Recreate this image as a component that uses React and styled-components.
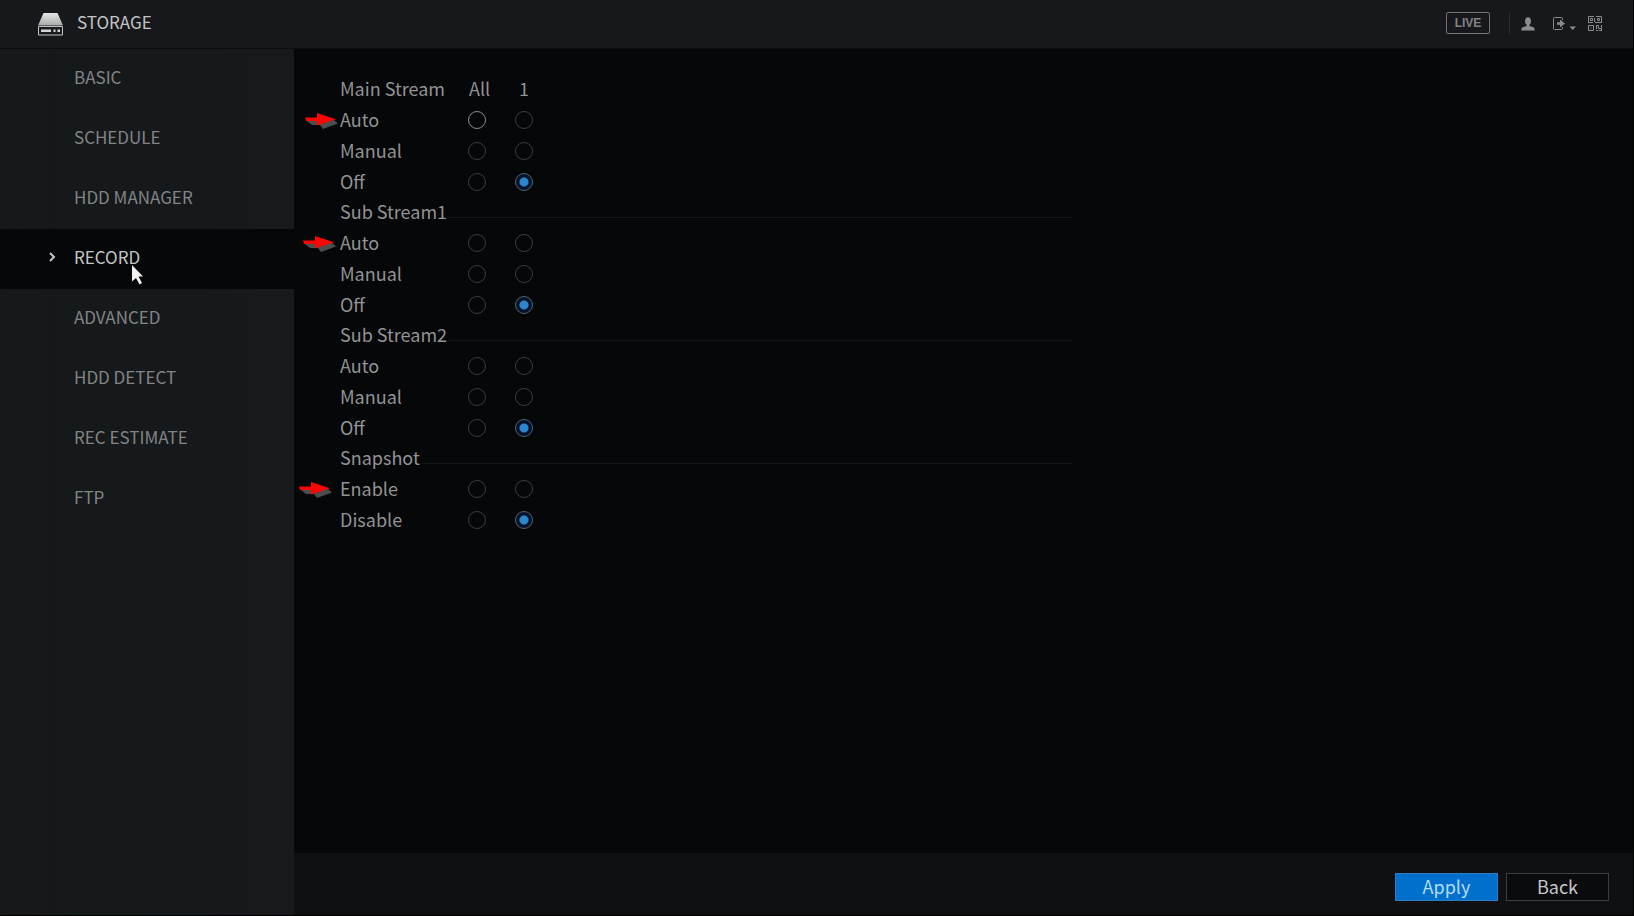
import React, { useState } from 'react';
import styled, { createGlobalStyle } from 'styled-components';

const GlobalStyle = createGlobalStyle`
  * {
    box-sizing: border-box;
  }
  body {
    margin: 0;
    background: #050708;
    color: #929394;
    font-family: "Noto Sans CJK SC", "Noto Sans", sans-serif;
    font-size: 18px;
    line-height: 24px;
  }
`;

const Page = styled.div`
  display: flex;
  flex-direction: column;
  min-height: 100vh;
  border-right: 1px solid #000;
  border-bottom: 1px solid #000;
`;

const Header = styled.header`
  display: flex;
  align-items: center;
  justify-content: space-between;
  height: 49px;
  padding: 0 31px 3px 38px;
  background: #17181b;
  border-bottom: 1px solid #0c0d0f;
`;

const Title = styled.h1`
  display: flex;
  align-items: center;
  gap: 14px;
  margin: 0;
  padding-bottom: 2px;
  color: #c3c4c5;
  font-size: 17px;
  font-weight: 400;

  svg {
    margin-top: 6px;
  }
`;

const Tools = styled.div`
  display: flex;
  align-items: center;
`;

const LiveButton = styled.button`
  width: 44px;
  height: 22px;
  padding: 0;
  border: 1px solid #737476;
  border-radius: 2px;
  background: transparent;
  color: #828385;
  font: bold 12px/18px "Liberation Sans", Arial, sans-serif;
`;

const Separator = styled.span`
  width: 1px;
  height: 22px;
  margin: 0 11px 0 19px;
  background: #2b2c2f;
`;

const IconButton = styled.button`
  display: flex;
  padding: 2px 0 0;
  margin-right: ${props => props.$space || 0}px;
  border: 0;
  background: transparent;
  color: #8b8c8e;
`;

const Body = styled.div`
  display: flex;
  flex: 1;
`;

const Sidebar = styled.nav`
  flex: 0 0 294px;
  background: linear-gradient(90deg, #17181a 0%, #15191a 25%, #15191b 55%, #18191c 100%);
`;

const NavLink = styled.a`
  position: relative;
  display: flex;
  align-items: center;
  height: 60px;
  padding: 0 0 4px 49px;
  background: ${props => (props.$active ? '#050708' : 'transparent')};
  color: ${props => (props.$active ? '#c4c5c6' : '#828485')};
  font-size: 17px;
  text-decoration: none;
`;

const NavMark = styled.span`
  display: flex;
  width: 25px;
`;

// lies over the active entry
const Pointer = styled.svg`
  position: absolute;
  left: 131px;
  top: 36px;
`;

const Main = styled.div`
  display: flex;
  flex: 1;
  flex-direction: column;
`;

const Content = styled.main`
  flex: 1;
  padding: 23px 46px;
`;

const RecordTable = styled.table`
  width: 100%;
  max-width: 732px;
  table-layout: fixed;
  border-collapse: collapse;

  th,
  td {
    height: 31px;
    padding: 0;
    font-weight: 400;
    text-align: left;
  }
`;

const LabelCol = styled.col`
  width: 113px;
`;

const ChannelCol = styled.col`
  width: ${props => props.$width}px;
`;

const ColumnHead = styled.th`
  && {
    padding-left: ${props => props.$indent}px;
  }
`;

const GroupHead = styled.th`
  && {
    height: 30px;
  }
`;

const GroupTitle = styled.div`
  display: flex;
  align-items: center;
  gap: 2px;
`;

const GroupLine = styled.span`
  flex: 1;
  height: 1px;
  margin-top: 12px;
  background: #15181a;
`;

const RowHead = styled.th`
  position: relative;
`;

const ArrowMark = styled.svg`
  position: absolute;
  top: 10px;
  right: calc(100% + ${props => props.$gap}px);
`;

const RadioCell = styled.td`
  && {
    text-align: center;
  }
`;

const Radio = styled.input`
  display: block;
  width: 18px;
  height: 18px;
  margin: 2px auto 0;
  appearance: none;
  border: 1px solid ${props => (props.$focus ? '#8a8b8c' : '#3a3c3d')};
  border-radius: 50%;
  background: transparent;

  &:checked {
    border-color: #54616e;
    background: radial-gradient(circle, #2b86cf 0, #2b86cf 4px, #04142b 5px);
  }
`;

const Footer = styled.footer`
  display: flex;
  align-items: flex-start;
  justify-content: flex-end;
  gap: 8px;
  height: 62px;
  padding: 20px 24px 0;
  background: #0e1012;
`;

const Button = styled.button`
  width: 103px;
  height: 28px;
  padding: 0 0 4px;
  border: 1px solid ${props => (props.$primary ? '#2a7cc4' : '#3c3e40')};
  background: ${props => (props.$primary ? '#0070cc' : '#0a0b0d')};
  color: ${props => (props.$primary ? '#b5dcf5' : '#c6c7c8')};
  font: inherit;
`;

const menu = [
  'BASIC',
  'SCHEDULE',
  'HDD MANAGER',
  'RECORD',
  'ADVANCED',
  'HDD DETECT',
  'REC ESTIMATE',
  'FTP',
];

const groups = [
  { title: 'Main Stream', rows: ['Auto', 'Manual', 'Off'], marked: 'Auto', gap: 1 },
  { title: 'Sub Stream1', rows: ['Auto', 'Manual', 'Off'], marked: 'Auto', gap: 3 },
  { title: 'Sub Stream2', rows: ['Auto', 'Manual', 'Off'] },
  { title: 'Snapshot', rows: ['Enable', 'Disable'], marked: 'Enable', gap: 7 },
];

const DiskIcon = () => (
  <svg width="25" height="23" viewBox="0 0 25 23" aria-hidden="true">
    <defs>
      <linearGradient id="disk" x1="0" y1="0" x2="0" y2="1">
        <stop offset="0" stopColor="#e4e4e4" />
        <stop offset="1" stopColor="#a9aaab" />
      </linearGradient>
    </defs>
    <path d="M5.500 0h14l5.500 12.500H0z" fill="url(#disk)" />
    <path d="M.5 13.500h24v8.500H.5z" fill="#1a1b1d" stroke="#bfc0c1" />
    <path d="M3 16.500h10v2.500H3zM15.500 16.500h2v2.500h-2zM19.500 16.500h2.500v2.500h-2.500z" fill="#d6d6d6" />
  </svg>
);

const UserIcon = () => (
  <svg width="14" height="14" viewBox="0 0 14 14" fill="currentColor" aria-hidden="true">
    <ellipse cx="7" cy="4" rx="3" ry="3.800" />
    <path d="M5.500 7h3v2l4 1.200q1.200.6 1.200 3.300H.3q0-2.700 1.200-3.300l4-1.200z" />
  </svg>
);

const ExitIcon = () => (
  <svg width="24" height="16" viewBox="0 0 24 16" fill="none" stroke="currentColor" aria-hidden="true">
    <path d="M10.500 4V2.500q0-1-1-1h-7q-1 0-1 1v10q0 1 1 1h7q1 0 1-1V11" />
    <path d="M5 6.200h3V3.500l5 4-5 4V8.800H5z" fill="currentColor" stroke="none" />
    <path d="M17.500 10.500h6.500l-3.250 3.500z" fill="currentColor" stroke="none" />
  </svg>
);

const CodeIcon = () => (
  <svg width="14" height="15" viewBox="0 0 14 15" fill="none" stroke="currentColor" aria-hidden="true">
    <path d="M.5 6V.5H6M8 .5h5.500V6M2.500 2.500h2v2h-2zM9.500 2.500h2v2h-2zM6.500 2v4M0 6.500h5M7 6.500h7" />
    <path d="M.5 9.500h5v5h-5zM2.500 12h1M8 14.500h2M8.500 9v4M8 9.500h2.500v3h3V9M13.500 13v2M11 14.500h3" />
  </svg>
);

const RedArrow = ({ gap }) => (
  <ArrowMark $gap={gap} width="34" height="17" viewBox="0 0 34 17" aria-hidden="true">
    <path d="M2 8l5 4h8l3 4 15-5.500L29 7z" fill="#4c4d4e" />
    <path d="M0 4.500h12V0l19 6.200L12 12.500V8H1z" fill="#fb0505" />
  </ArrowMark>
);

const StreamGroup = ({ group, first }) => {
  const [all, setAll] = useState(null);
  const [channel, setChannel] = useState(group.rows[group.rows.length - 1]);

  return (
    <tbody>
      {first ? (
        <tr>
          <th scope="col">{group.title}</th>
          <ColumnHead scope="col" $indent={16}>All</ColumnHead>
          <ColumnHead scope="col" $indent={19}>1</ColumnHead>
          <td />
        </tr>
      ) : (
        <tr>
          <GroupHead colSpan={4} scope="rowgroup">
            <GroupTitle>
              {group.title}
              <GroupLine />
            </GroupTitle>
          </GroupHead>
        </tr>
      )}
      {group.rows.map(row => (
        <tr key={row}>
          <RowHead scope="row">
            {group.marked === row && <RedArrow gap={group.gap} />}
            {row}
          </RowHead>
          <RadioCell>
            <Radio
              type="radio"
              name={`${group.title} all`}
              aria-label={`${group.title} ${row}, all channels`}
              checked={all === row}
              onChange={() => { setAll(row); setChannel(row); }}
              $focus={first && row === 'Auto'}
            />
          </RadioCell>
          <RadioCell>
            <Radio
              type="radio"
              name={`${group.title} 1`}
              aria-label={`${group.title} ${row}, channel 1`}
              checked={channel === row}
              onChange={() => setChannel(row)}
            />
          </RadioCell>
          <td />
        </tr>
      ))}
    </tbody>
  );
};

export default function App() {
  const [page, setPage] = useState('RECORD');

  return (
    <Page>
      <GlobalStyle />
      <Header>
        <Title>
          <DiskIcon />
          STORAGE
        </Title>
        <Tools>
          <LiveButton type="button">LIVE</LiveButton>
          <Separator />
          <IconButton type="button" aria-label="User" $space={17}><UserIcon /></IconButton>
          <IconButton type="button" aria-label="Log out" $space={12}><ExitIcon /></IconButton>
          <IconButton type="button" aria-label="QR code"><CodeIcon /></IconButton>
        </Tools>
      </Header>
      <Body>
        <Sidebar>
          {menu.map(item => (
            <NavLink key={item} href="#" $active={item === page} onClick={() => setPage(item)}>
              <NavMark>
                {item === page && (
                  <svg width="7" height="10" viewBox="0 0 7 10" fill="none" stroke="#c4c5c6" strokeWidth="2" aria-hidden="true">
                    <path d="M1 1l4 4-4 4" />
                  </svg>
                )}
              </NavMark>
              {item}
              {item === 'RECORD' && (
                <Pointer width="13" height="20" viewBox="0 0 13 20" fill="#f1f1f1" aria-hidden="true">
                  <path d="M1 0l11 11.500H7.500l3.500 6.500-2.500 1.500L5 13l-4 3.500z" />
                </Pointer>
              )}
            </NavLink>
          ))}
        </Sidebar>
        <Main>
          <Content>
            <RecordTable>
              <colgroup>
                <LabelCol />
                <ChannelCol $width={47} />
                <ChannelCol $width={48} />
                <col />
              </colgroup>
              {groups.map((group, i) => (
                <StreamGroup key={group.title} group={group} first={i === 0} />
              ))}
            </RecordTable>
          </Content>
          <Footer>
            <Button type="button" $primary>Apply</Button>
            <Button type="button">Back</Button>
          </Footer>
        </Main>
      </Body>
    </Page>
  );
}
